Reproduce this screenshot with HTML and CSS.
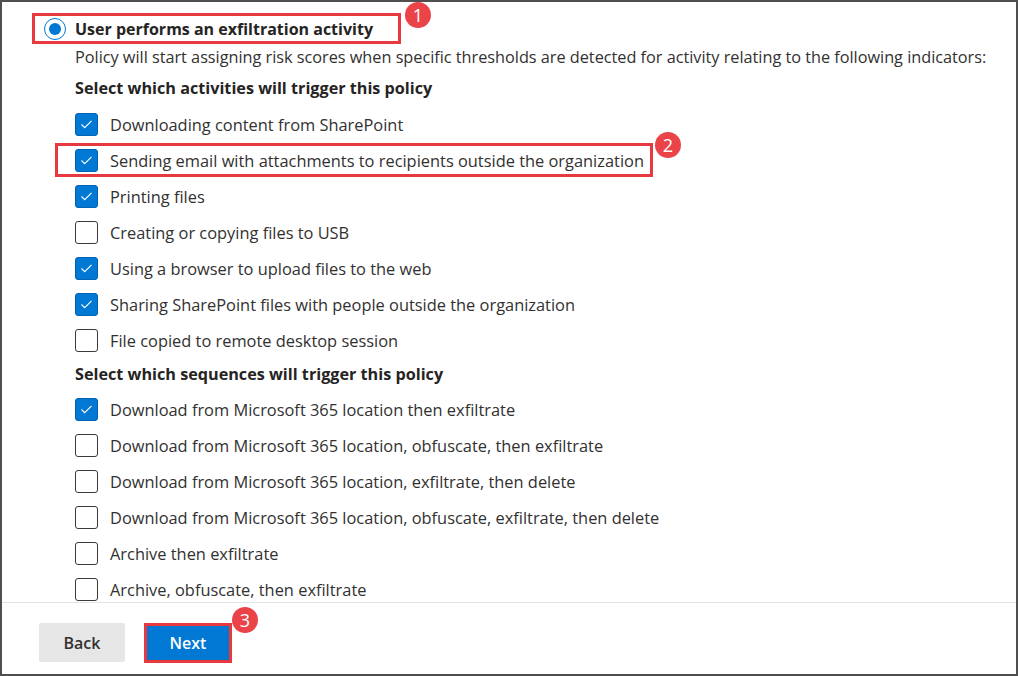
FILE: index.html
```html
<!DOCTYPE html>
<html>
<head>
<meta charset="utf-8">
<link rel="stylesheet" href="styles.css">
</head>
<body>
<div class="frame">
  <div class="content">
    <div class="title-box">
      <span class="radio"><span class="dot"></span></span>
      <span class="title">User performs an exfiltration activity</span>
      <span class="badge b1">1</span>
    </div>
    <div class="desc">Policy will start assigning risk scores when specific thresholds are detected for activity relating to the following indicators:</div>
    <div class="heading">Select which activities will trigger this policy</div>
    <div class="row"><span class="cb on"><svg viewBox="0 0 23 23"><polyline points="6,11.5 9.5,15 17,7.5"/></svg></span><span class="lbl">Downloading content from SharePoint</span></div>
    <div class="row hl"><span class="cb on"><svg viewBox="0 0 23 23"><polyline points="6,11.5 9.5,15 17,7.5"/></svg></span><span class="lbl">Sending email with attachments to recipients outside the organization</span><span class="badge b2">2</span></div>
    <div class="row"><span class="cb on"><svg viewBox="0 0 23 23"><polyline points="6,11.5 9.5,15 17,7.5"/></svg></span><span class="lbl">Printing files</span></div>
    <div class="row"><span class="cb"></span><span class="lbl">Creating or copying files to USB</span></div>
    <div class="row"><span class="cb on"><svg viewBox="0 0 23 23"><polyline points="6,11.5 9.5,15 17,7.5"/></svg></span><span class="lbl">Using a browser to upload files to the web</span></div>
    <div class="row"><span class="cb on"><svg viewBox="0 0 23 23"><polyline points="6,11.5 9.5,15 17,7.5"/></svg></span><span class="lbl">Sharing SharePoint files with people outside the organization</span></div>
    <div class="row"><span class="cb"></span><span class="lbl">File copied to remote desktop session</span></div>
    <div class="heading h2">Select which sequences will trigger this policy</div>
    <div class="row"><span class="cb on"><svg viewBox="0 0 23 23"><polyline points="6,11.5 9.5,15 17,7.5"/></svg></span><span class="lbl">Download from Microsoft 365 location then exfiltrate</span></div>
    <div class="row"><span class="cb"></span><span class="lbl">Download from Microsoft 365 location, obfuscate, then exfiltrate</span></div>
    <div class="row"><span class="cb"></span><span class="lbl">Download from Microsoft 365 location, exfiltrate, then delete</span></div>
    <div class="row"><span class="cb"></span><span class="lbl">Download from Microsoft 365 location, obfuscate, exfiltrate, then delete</span></div>
    <div class="row"><span class="cb"></span><span class="lbl">Archive then exfiltrate</span></div>
    <div class="row"><span class="cb"></span><span class="lbl">Archive, obfuscate, then exfiltrate</span></div>
  </div>
  <div class="footer">
    <button class="btn back">Back</button>
    <button class="btn next">Next<span class="badge b3">3</span></button>
  </div>
</div>
</body>
</html>
```
FILE: styles.css
```css
* { box-sizing: border-box; }
html, body { margin: 0; padding: 0; background: #fff; }
body {
  font-family: "Open Sans", "Noto Sans", sans-serif;
  color: #323130;
}
.frame {
  width: 1018px;
  height: 676px;
  border: 2px solid #4f4f4f;
  display: flex;
  flex-direction: column;
  overflow: hidden;
}
.content {
  height: 600px;
  overflow: hidden;
  padding: 11px 0 0 73px;
  display: flex;
  flex-direction: column;
  align-items: flex-start;
  flex: none;
}
.content > * { flex-shrink: 0; }
.title-box {
  position: relative;
  margin-left: -43px;
  width: 369px;
  height: 31px;
  border: 3px solid #e8393f;
  display: flex;
  align-items: center;
  padding-left: 9px;
}
.radio {
  width: 22px;
  height: 22px;
  border: 1px solid #0078d4;
  border-radius: 50%;
  display: flex;
  align-items: center;
  justify-content: center;
  flex: none;
}
.radio .dot {
  width: 12px;
  height: 12px;
  border-radius: 50%;
  background: #0078d4;
}
.title {
  margin-left: 9px;
  font-weight: 700;
  font-size: 16px;
  color: #252423;
  white-space: nowrap;
}
.desc {
  height: 27px;
  line-height: 27px;
  font-size: 16.3px;
  letter-spacing: -0.02px;
  white-space: nowrap;
}
.heading {
  height: 35px;
  line-height: 35px;
  font-size: 16.2px;
  font-weight: 700;
  color: #252423;
  white-space: nowrap;
}
.heading.h2 { height: 33px; line-height: 33px; }
.row {
  position: relative;
  height: 36px;
  display: flex;
  align-items: center;
}
.row.hl {
  height: 34px;
  margin: 1px 0 1px -20px;
  border: 3px solid #e8393f;
  padding: 0 6px 0 17px;
}
.cb {
  width: 23px;
  height: 23px;
  border: 1px solid #3b3a39;
  border-radius: 3px;
  flex: none;
  display: flex;
}
.cb.on {
  background: #0078d4;
  border-color: #0063b1;
}
.cb svg {
  width: 21px;
  height: 21px;
}
.cb svg polyline {
  fill: none;
  stroke: #fff;
  stroke-width: 1.2;
}
.lbl {
  margin-left: 12px;
  font-size: 16.4px;
  white-space: nowrap;
}
.badge {
  position: absolute;
  width: 26px;
  height: 26px;
  border-radius: 50%;
  background: #ea4449;
  color: #fff;
  font-family: "Open Sans", sans-serif;
  font-size: 18px;
  font-weight: 400;
  line-height: 26px;
  text-align: center;
}
.b1 { left: calc(100% + 7px); top: -14px; }
.b2 { left: calc(100% + 5px); top: -14px; }
.b3 { left: calc(100% + 3px); top: -19px; }
.footer {
  flex: none;
  height: 72px;
  border-top: 1px solid #e3e3e3;
  padding: 20px 0 0 37px;
  display: flex;
  align-items: flex-start;
  gap: 19px;
}
.btn {
  font-family: "Open Sans", sans-serif;
  font-size: 16px;
  font-weight: 600;
  border-radius: 2px;
  padding: 0;
  cursor: pointer;
}
.back {
  width: 86px;
  height: 39px;
  background: #e6e6e6;
  border: none;
  color: #323130;
}
.next {
  position: relative;
  width: 88px;
  height: 40px;
  background: #0078d4;
  border: 3px solid #e8393f;
  border-radius: 0;
  color: #fff;
}
```
